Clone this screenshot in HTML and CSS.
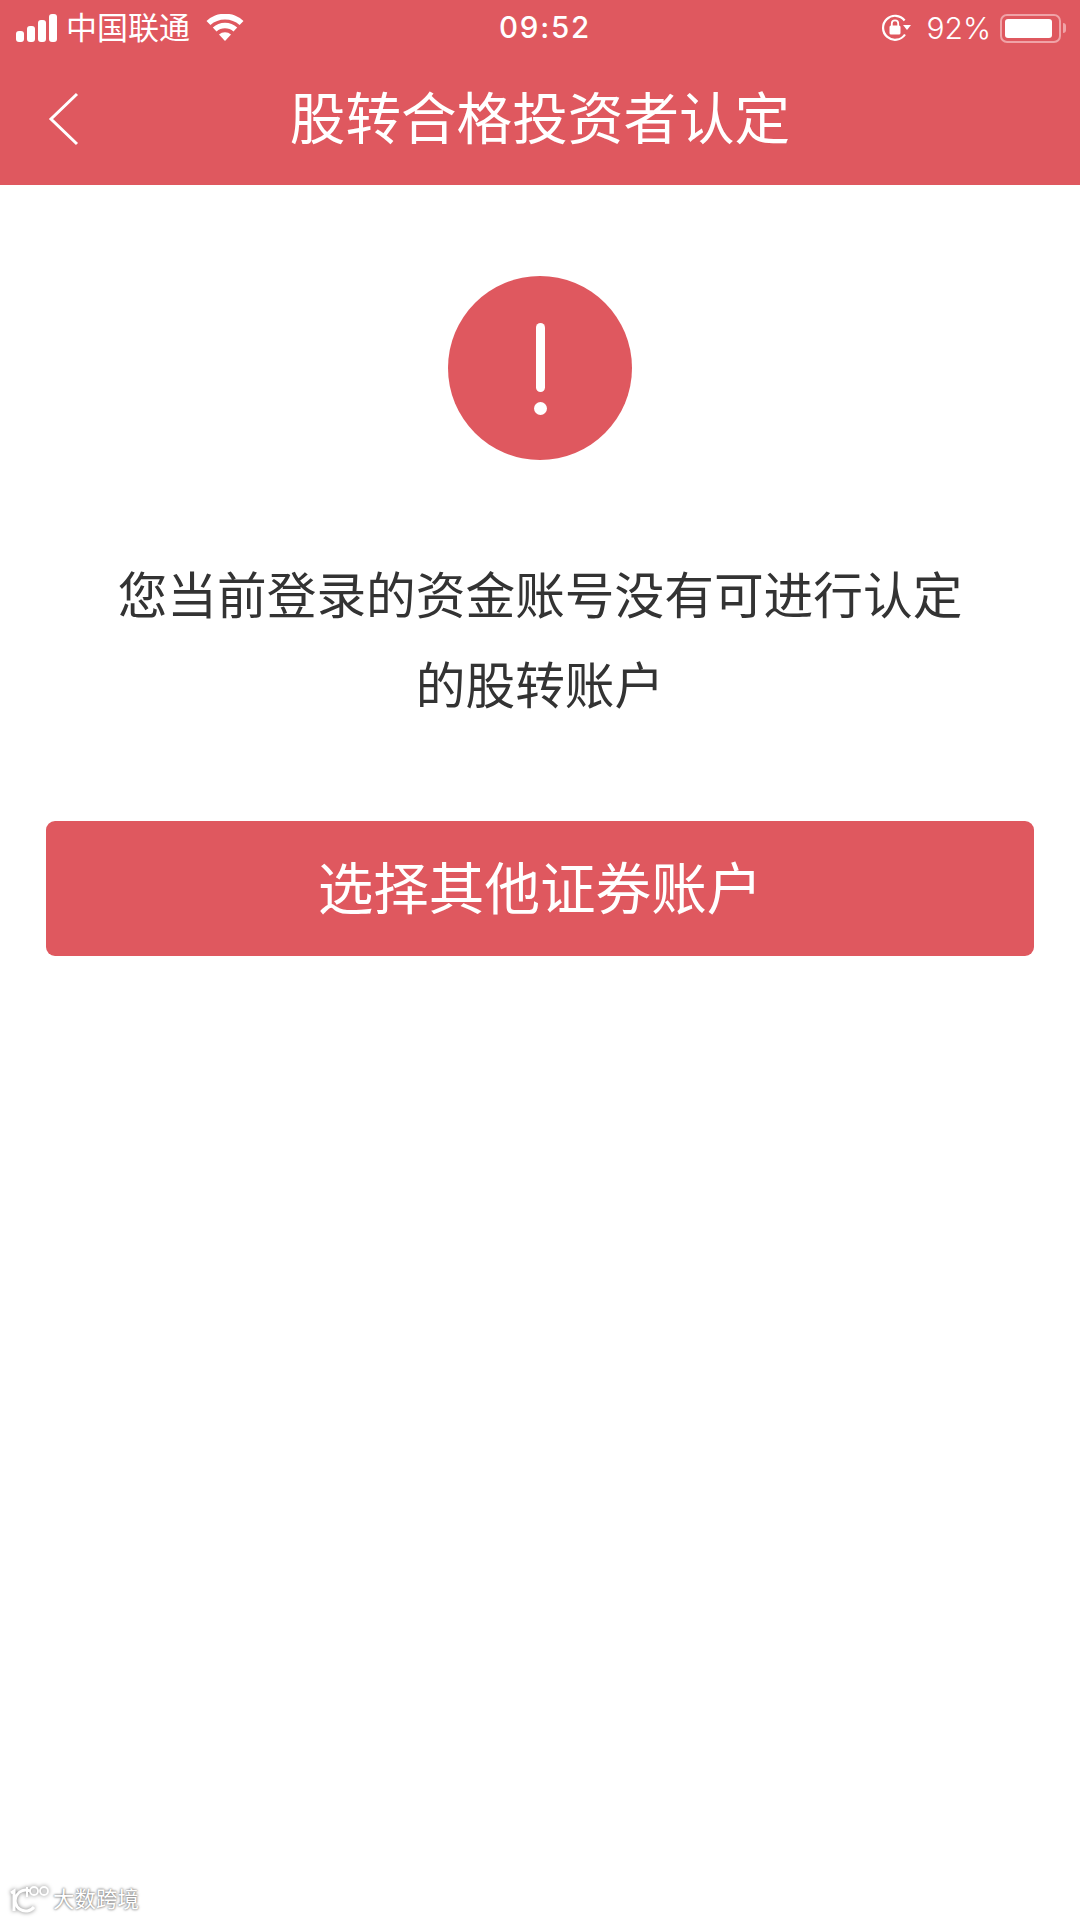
FILE: index.html
```html
<!DOCTYPE html>
<html lang="zh-CN">
<head>
    <meta charset="UTF-8">
    <meta name="viewport" content="width=device-width, initial-scale=1.0">
    <title>股转合格投资者认定</title>
    <link rel="stylesheet" href="styles.css">
</head>
<body>
    <header class="top">
        <div class="status">
            <div class="status-left">
                <svg class="signal" width="42" height="28" viewBox="0 0 42 28">
                    <rect x="0" y="17" width="8" height="11" rx="3"/>
                    <rect x="11" y="12" width="8" height="16" rx="3"/>
                    <rect x="22" y="6" width="8" height="22" rx="3"/>
                    <rect x="33" y="0" width="8" height="28" rx="3"/>
                </svg>
                <span class="carrier">中国联通</span>
                <svg class="wifi" width="38" height="28" viewBox="0 0 38 28">
                    <path d="M19 27 L13 20.5 A9 9 0 0 1 25 20.5 Z"/>
                    <path d="M10.5 17.5 L6.8 13.6 A18 18 0 0 1 31.2 13.6 L27.5 17.5 A13 13 0 0 0 10.5 17.5 Z"/>
                    <path d="M4.4 11 L0.5 7 A27 27 0 0 1 37.5 7 L33.6 11 A22 22 0 0 0 4.4 11 Z"/>
                </svg>
            </div>
            <span class="time">09:52</span>
            <div class="status-right">
                <svg class="lock" width="30" height="28" viewBox="0 0 30 28">
                    <path d="M24 20.5 A12 12 0 1 1 23.6 6.5" fill="none" stroke="#fff" stroke-width="2.2"/>
                    <path d="M22 11 L30 11 L26 16 Z" fill="#fff"/>
                    <rect x="8.5" y="11.5" width="11" height="9" rx="1.5" fill="#fff"/>
                    <path d="M10.8 12 V9.5 A3.2 3.2 0 0 1 17.2 9.5 V12" fill="none" stroke="#fff" stroke-width="1.8"/>
                </svg>
                <span class="percent">92%</span>
                <div class="battery">
                    <div class="battery-body"><div class="battery-level"></div></div>
                    <div class="battery-tip"></div>
                </div>
            </div>
        </div>
        <div class="navbar">
            <svg class="back" width="32" height="56" viewBox="0 0 32 56">
                <path d="M29 3 L3 28 L29 53" fill="none" stroke="#fff" stroke-width="3"/>
            </svg>
            <h1 class="title">股转合格投资者认定</h1>
        </div>
    </header>

    <main class="content">
        <div class="alert-icon">
            <span class="alert-bar"></span>
            <span class="alert-dot"></span>
        </div>
        <p class="message">您当前登录的资金账号没有可进行认定<br>的股转账户</p>
        <button class="action">选择其他证券账户</button>
    </main>

    <div class="watermark">
        <svg class="watermark-logo" width="42" height="30" viewBox="0 0 42 30">
            <path d="M3 10 L6 8 V28" fill="none" stroke="#fff" stroke-width="3"/>
            <path d="M22 8 A10.5 10.5 0 1 0 26 24" fill="none" stroke="#fff" stroke-width="3"/>
            <path d="M19 4 V14" fill="none" stroke="#fff" stroke-width="2"/>
            <circle cx="26" cy="8" r="4" fill="none" stroke="#fff" stroke-width="1.8"/>
            <circle cx="36" cy="8" r="4" fill="none" stroke="#fff" stroke-width="1.8"/>
        </svg>
        <span class="watermark-text">大数跨境</span>
    </div>
</body>
</html>
```

FILE: styles.css
```css
:root {
    --merah: #df585f;
}

*,
*::before,
*::after {
    box-sizing: border-box;
}

body {
    font-family: "Noto Sans CJK SC", "Noto Sans", sans-serif;
    background-color: #ffffff;
    margin: 0;
    height: 1920px;
    position: relative;
    overflow: hidden;
}

.top {
    background-color: var(--merah);
    height: 185px;
    color: #ffffff;
}

.status {
    display: grid;
    grid-template-columns: 1fr auto 1fr;
    align-items: center;
    height: 56px;
    padding: 0 14px 0 16px;
}

.status-left,
.status-right {
    display: flex;
    align-items: center;
}

.status-right {
    justify-content: flex-end;
}

.signal,
.wifi {
    fill: #ffffff;
}

.carrier {
    font-size: 31px;
    line-height: 50px;
    margin-left: 8px;
    font-weight: 400;
    margin-bottom: 4px;
}

.wifi {
    margin-left: 16px;
}

.time {
    font-family: "Inter", sans-serif;
    font-size: 29.5px;
    letter-spacing: 1.8px;
    font-weight: 500;
    margin: 0 0 2px 8px;
}

.percent {
    font-family: "Inter", sans-serif;
    font-size: 30px;
    font-weight: 300;
    margin-left: 15px;
    margin-right: 9px;
}

.battery {
    display: flex;
    align-items: center;
}

.battery-body {
    width: 61px;
    height: 29px;
    border: 2px solid #f0a3a7;
    border-radius: 7px;
    padding: 3px;
}

.battery-level {
    height: 100%;
    width: 92%;
    background-color: #ffffff;
    border-radius: 3px;
}

.battery-tip {
    width: 3px;
    height: 10px;
    margin-left: 2px;
    background-color: #f0a3a7;
    border-radius: 0 3px 3px 0;
}

.navbar {
    position: relative;
    height: 129px;
    display: flex;
    align-items: center;
    justify-content: center;
    padding-bottom: 10px;
}

.back {
    position: absolute;
    left: 48px;
    top: 35px;
}

.title {
    margin: 0;
    font-size: 55.6px;
    font-weight: 400;
    line-height: 1;
}

.content {
    display: flex;
    flex-direction: column;
    align-items: center;
    padding: 91px 46px 0;
}

.alert-icon {
    width: 184px;
    height: 184px;
    border-radius: 50%;
    background-color: var(--merah);
    display: flex;
    flex-direction: column;
    align-items: center;
    padding-top: 47px;
}

.alert-bar {
    width: 9px;
    height: 69px;
    border-radius: 5px;
    background-color: #ffffff;
}

.alert-dot {
    width: 13px;
    height: 13px;
    margin-top: 10px;
    border-radius: 50%;
    background-color: #ffffff;
}

.message {
    margin: 87px 0 0;
    font-size: 49.7px;
    line-height: 90px;
    font-weight: 400;
    color: #333333;
    text-align: center;
}

.action {
    display: block;
    width: 100%;
    height: 135px;
    margin-top: 94px;
    border: none;
    border-radius: 9px;
    background-color: var(--merah);
    color: #ffffff;
    font-family: inherit;
    font-size: 55.6px;
    font-weight: 400;
    padding: 0 0 8px;
}

/* watermark in the corner */
.watermark {
    position: absolute;
    left: 8px;
    bottom: 7px;
    display: flex;
    align-items: center;
    gap: 3px;
    color: #ffffff;
    text-shadow: 0 0 3px #777777, 0 0 2px #888888;
}

.watermark-logo {
    filter: drop-shadow(0 0 2px #777777);
}

.watermark-text {
    font-size: 21.5px;
    line-height: 30px;
}
```
